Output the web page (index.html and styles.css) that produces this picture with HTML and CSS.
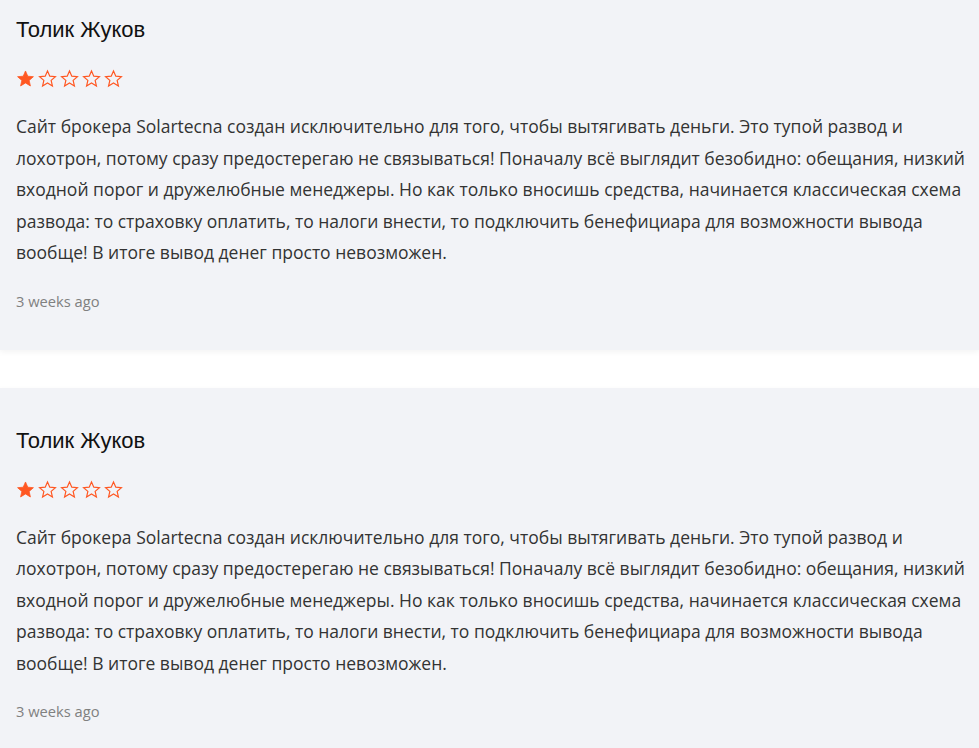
FILE: index.html
```html
<!DOCTYPE html>
<html lang="ru">
<head>
    <meta charset="UTF-8">
    <meta name="viewport" content="width=device-width, initial-scale=1.0">
    <title>Отзывы</title>
    <link rel="stylesheet" href="styles.css">
</head>
<body>
    <div class="reviews">
        <div class="review">
            <h3 class="review-author">Толик Жуков</h3>
            <div class="stars">
                <svg class="star" viewBox="0 0 24 24"><path class="full" d="M12 2.5l2.9 6.6 7.1.6-5.4 4.7 1.6 7-6.2-3.8-6.2 3.8 1.6-7L2 9.7l7.1-.6z"/></svg>
                <svg class="star" viewBox="0 0 24 24"><path class="empty" d="M12 2.5l2.9 6.6 7.1.6-5.4 4.7 1.6 7-6.2-3.8-6.2 3.8 1.6-7L2 9.7l7.1-.6z"/></svg>
                <svg class="star" viewBox="0 0 24 24"><path class="empty" d="M12 2.5l2.9 6.6 7.1.6-5.4 4.7 1.6 7-6.2-3.8-6.2 3.8 1.6-7L2 9.7l7.1-.6z"/></svg>
                <svg class="star" viewBox="0 0 24 24"><path class="empty" d="M12 2.5l2.9 6.6 7.1.6-5.4 4.7 1.6 7-6.2-3.8-6.2 3.8 1.6-7L2 9.7l7.1-.6z"/></svg>
                <svg class="star" viewBox="0 0 24 24"><path class="empty" d="M12 2.5l2.9 6.6 7.1.6-5.4 4.7 1.6 7-6.2-3.8-6.2 3.8 1.6-7L2 9.7l7.1-.6z"/></svg>
            </div>
            <p class="review-text">Сайт брокера Solartecna создан исключительно для того, чтобы вытягивать деньги. Это тупой развод и лохотрон, потому сразу предостерегаю не связываться! Поначалу всё выглядит безобидно: обещания, низкий входной порог и дружелюбные менеджеры. Но как только вносишь средства, начинается классическая схема развода: то страховку оплатить, то налоги внести, то подключить бенефициара для возможности вывода вообще! В итоге вывод денег просто невозможен.</p>
            <div class="review-date">3 weeks ago</div>
        </div>

        <div class="review">
            <h3 class="review-author">Толик Жуков</h3>
            <div class="stars">
                <svg class="star" viewBox="0 0 24 24"><path class="full" d="M12 2.5l2.9 6.6 7.1.6-5.4 4.7 1.6 7-6.2-3.8-6.2 3.8 1.6-7L2 9.7l7.1-.6z"/></svg>
                <svg class="star" viewBox="0 0 24 24"><path class="empty" d="M12 2.5l2.9 6.6 7.1.6-5.4 4.7 1.6 7-6.2-3.8-6.2 3.8 1.6-7L2 9.7l7.1-.6z"/></svg>
                <svg class="star" viewBox="0 0 24 24"><path class="empty" d="M12 2.5l2.9 6.6 7.1.6-5.4 4.7 1.6 7-6.2-3.8-6.2 3.8 1.6-7L2 9.7l7.1-.6z"/></svg>
                <svg class="star" viewBox="0 0 24 24"><path class="empty" d="M12 2.5l2.9 6.6 7.1.6-5.4 4.7 1.6 7-6.2-3.8-6.2 3.8 1.6-7L2 9.7l7.1-.6z"/></svg>
                <svg class="star" viewBox="0 0 24 24"><path class="empty" d="M12 2.5l2.9 6.6 7.1.6-5.4 4.7 1.6 7-6.2-3.8-6.2 3.8 1.6-7L2 9.7l7.1-.6z"/></svg>
            </div>
            <p class="review-text">Сайт брокера Solartecna создан исключительно для того, чтобы вытягивать деньги. Это тупой развод и лохотрон, потому сразу предостерегаю не связываться! Поначалу всё выглядит безобидно: обещания, низкий входной порог и дружелюбные менеджеры. Но как только вносишь средства, начинается классическая схема развода: то страховку оплатить, то налоги внести, то подключить бенефициара для возможности вывода вообще! В итоге вывод денег просто невозможен.</p>
            <div class="review-date">3 weeks ago</div>
        </div>
    </div>
</body>
</html>
```

FILE: styles.css
```css
:root {
    --card-bg: #f2f3f7;
    --text-color: #333;
    --title-color: #111;
    --muted: #808080;
    --star: #ff5722;
}

body {
    margin: 0;
    background: #fff;
    font-family: "Open Sans", Arial, sans-serif;
    color: var(--text-color);
}

.reviews {
    margin-top: -23px;
    display: flex;
    flex-direction: column;
    gap: 38px;
}

.review {
    background: var(--card-bg);
    padding: 40px 8px 39px 16px;
    box-shadow: 0 2px 6px rgba(0, 0, 0, 0.05);
}

.review-author {
    margin: 0;
    font-family: "Liberation Sans", Arial, sans-serif;
    font-weight: normal;
    font-size: 22px;
    line-height: 25px;
    color: var(--title-color);
}

.stars {
    display: flex;
    gap: 3px;
    margin-top: 27px;
}

.star {
    width: 19px;
    height: 19px;
}

.star .full {
    fill: var(--star);
    stroke: var(--star);
    stroke-width: 1;
}

.star .empty {
    fill: none;
    stroke: var(--star);
    stroke-width: 1.5;
}

.review-text {
    margin: 23px 0 0;
    font-size: 17.5px;
    line-height: 31.5px;
}

.review-date {
    margin-top: 22px;
    font-size: 14.7px;
    line-height: 20px;
    color: var(--muted);
}
```
